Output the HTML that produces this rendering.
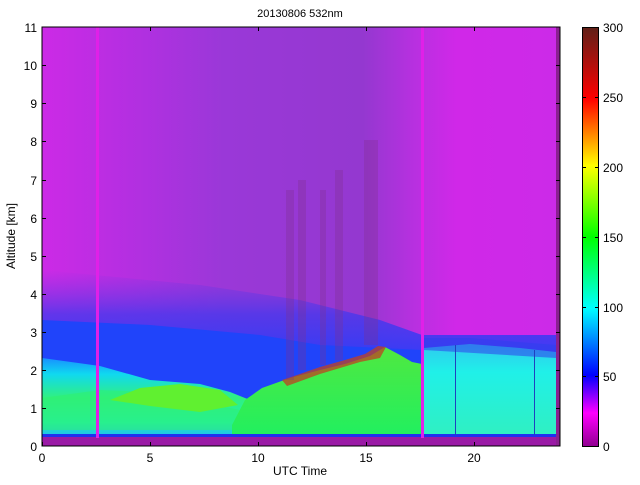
<!DOCTYPE html>
<html><head><style>
body{margin:0;background:#fff;width:640px;height:480px;overflow:hidden;font-family:"Liberation Sans",sans-serif}
</style></head><body>
<svg width="640" height="480" xmlns="http://www.w3.org/2000/svg" font-family="Liberation Sans, sans-serif" font-size="12">
<defs>
<linearGradient id="bgH" x1="0" x2="1" y1="0" y2="0">
<stop offset="0" stop-color="#cc2ae6"/><stop offset="0.2" stop-color="#b030e0"/><stop offset="0.35" stop-color="#9a38d8"/>
<stop offset="0.62" stop-color="#9438d0"/><stop offset="0.72" stop-color="#b830e0"/><stop offset="0.8" stop-color="#d028e8"/><stop offset="1" stop-color="#cc2ae8"/>
</linearGradient>
<linearGradient id="blueV" x1="0" x2="0" y1="0" y2="1">
<stop offset="0" stop-color="#7038e0" stop-opacity="0"/><stop offset="0.4" stop-color="#4838ec" stop-opacity="0.8"/><stop offset="1" stop-color="#1c40ff"/>
</linearGradient>
<linearGradient id="lowL" x1="0" x2="0" y1="0" y2="1">
<stop offset="0" stop-color="#1890ff"/><stop offset="0.2" stop-color="#10d8f0"/><stop offset="0.5" stop-color="#30f080"/><stop offset="0.8" stop-color="#20f0b0"/><stop offset="1" stop-color="#20b8f8"/>
</linearGradient>
<linearGradient id="midG" x1="0" x2="0" y1="0" y2="1">
<stop offset="0" stop-color="#50e840"/><stop offset="1" stop-color="#20f060"/>
</linearGradient>
<linearGradient id="rightC" x1="0" x2="0" y1="0" y2="1">
<stop offset="0" stop-color="#30c8f0"/><stop offset="0.3" stop-color="#20f0e8"/><stop offset="1" stop-color="#30f0c0"/>
</linearGradient>
<linearGradient id="cb" x1="0" x2="0" y1="1" y2="0">
<stop offset="0" stop-color="#900090"/><stop offset="0.08" stop-color="#ff00ff"/><stop offset="0.17" stop-color="#0000ff"/>
<stop offset="0.33" stop-color="#00ffff"/><stop offset="0.5" stop-color="#00ff00"/><stop offset="0.67" stop-color="#ffff00"/>
<stop offset="0.83" stop-color="#ff0000"/><stop offset="1" stop-color="#602018"/>
</linearGradient>
<clipPath id="pc"><rect x="42" y="27" width="518" height="419"/></clipPath>
</defs>
<text x="300" y="17" text-anchor="middle" font-size="11">20130806 532nm</text>
<g clip-path="url(#pc)">
<rect x="42" y="27" width="518" height="419" fill="url(#bgH)"/>
<!-- blue band -->
<path d="M42 270 L200 285 L300 300 L380 320 L422 335 L560 335 L560 370 L42 380 Z" fill="url(#blueV)"/>
<path d="M42 320 L150 325 L260 335 L320 345 L422 350 L422 420 L42 420 Z" fill="#2044fa"/>
<!-- low left cyan/green -->
<path d="M42 358 L100 366 L150 380 L200 384 L230 392 L250 400 L250 438 L42 438 Z" fill="url(#lowL)"/>
<path d="M42 398 L100 390 L150 392 L200 402 L250 412 L250 430 L42 430 Z" fill="#30f070" opacity="0.55"/>
<path d="M110 400 L140 388 L180 384 L220 390 L238 405 L200 412 L150 406 Z" fill="#60f030"/>
<!-- middle green rising -->
<path d="M232 425 L245 400 L262 388 L290 378 L320 370 L345 364 L370 356 L385 347 L400 355 L412 362 L422 364 L422 438 L232 438 Z" fill="url(#midG)"/>
<path d="M282 380 L300 374 L320 367 L345 360 L365 354 L378 346 L386 347 L380 358 L360 362 L320 374 L287 386 Z" fill="#c04020" opacity="0.75"/>
<!-- dark vertical streaks -->
<g fill="#80308a" opacity="0.3">
<rect x="286" y="190" width="8" height="190"/><rect x="298" y="180" width="8" height="190"/>
<rect x="320" y="190" width="6" height="175"/><rect x="335" y="170" width="8" height="190"/>
<rect x="364" y="140" width="14" height="205"/>
</g>
<!-- right cyan region -->
<path d="M424 348 L470 344 L520 348 L556 352 L556 438 L424 438 Z" fill="url(#rightC)"/>
<path d="M424 338 L470 338 L556 345 L556 358 L424 350 Z" fill="#3040ec" opacity="0.55"/>
<!-- bottom strips -->
<rect x="42" y="434" width="518" height="3" fill="#2030f0"/>
<rect x="42" y="437" width="518" height="9" fill="#9a1aa6"/>
<rect x="556" y="27" width="4" height="419" fill="#8a2090"/>
<!-- vertical lines -->
<rect x="96" y="27" width="3" height="411" fill="#e020e8"/>
<rect x="421" y="27" width="3" height="411" fill="#e020e8"/>
<rect x="455" y="345" width="1" height="90" fill="#2040c0"/>
<rect x="534" y="350" width="1" height="85" fill="#2040c0"/>
</g>
<rect x="42" y="27" width="518" height="419" fill="none" stroke="#000" stroke-width="1"/>
<g stroke="#000" stroke-width="1">
<path d="M42.5 446v-4M150.5 446v-4M258.5 446v-4M366.5 446v-4M474.5 446v-4M150.5 27v4M258.5 27v4M366.5 27v4M474.5 27v4"/>
<path d="M42 408.5h4M42 370.5h4M42 332.5h4M42 294.5h4M42 256.5h4M42 218.5h4M42 180.5h4M42 141.5h4M42 103.5h4M42 65.5h4M556 408.5h4M556 370.5h4M556 332.5h4M556 294.5h4M556 256.5h4M556 218.5h4M556 180.5h4M556 141.5h4M556 103.5h4M556 65.5h4"/>
</g>
<g text-anchor="middle">
<text x="42" y="462">0</text><text x="150" y="462">5</text><text x="258" y="462">10</text><text x="366" y="462">15</text><text x="474" y="462">20</text>
</g>
<g text-anchor="end">
<text x="37" y="451">0</text><text x="37" y="413">1</text><text x="37" y="375">2</text><text x="37" y="337">3</text><text x="37" y="299">4</text><text x="37" y="261">5</text><text x="37" y="223">6</text><text x="37" y="185">7</text><text x="37" y="146">8</text><text x="37" y="108">9</text><text x="37" y="70">10</text><text x="37" y="32">11</text>
</g>
<text x="300" y="475" text-anchor="middle">UTC Time</text>
<text transform="translate(15,236) rotate(-90)" text-anchor="middle">Altitude [km]</text>
<rect x="582.5" y="27.5" width="16" height="419" fill="url(#cb)" stroke="#000"/>
<g stroke="#000"><path d="M595 376.5h4M595 307.5h4M595 237.5h4M595 167.5h4M595 97.5h4M582 376.5h4M582 307.5h4M582 237.5h4M582 167.5h4M582 97.5h4"/></g>
<g>
<text x="603" y="451">0</text><text x="603" y="381">50</text><text x="603" y="312">100</text><text x="603" y="242">150</text><text x="603" y="172">200</text><text x="603" y="102">250</text><text x="603" y="32">300</text>
</g>
</svg>
</body></html>
